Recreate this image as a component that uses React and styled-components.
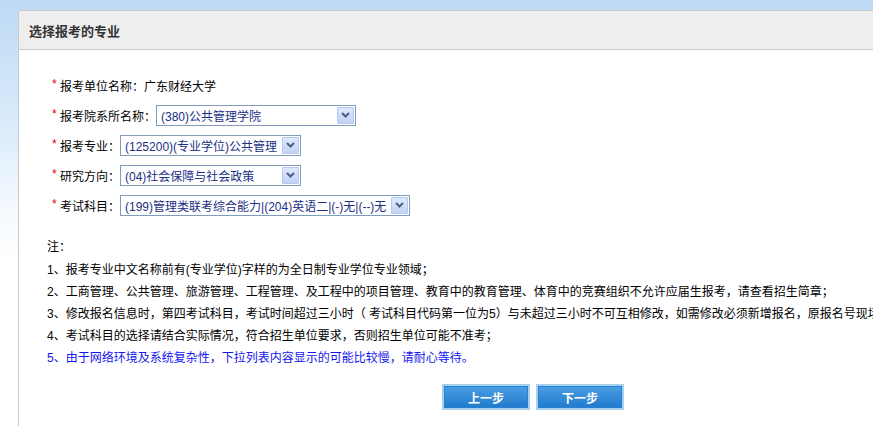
import React from "react";
import styled, { createGlobalStyle } from "styled-components";

const GlobalStyle = createGlobalStyle`
  html, body { margin: 0; padding: 0; }
  body {
    overflow: hidden;
    background: #ffffff linear-gradient(to bottom, #bddaf5 0px, #dcecfb 130px, #f7fbff 220px, #ffffff 260px) no-repeat;
    font-family: "Liberation Sans", "Noto Sans CJK SC", sans-serif;
    font-size: 12px;
    color: #000;
  }
`;

const Page = styled.div`
  padding: 10px 0 0 18px;
  height: 416px;
`;

const Panel = styled.div`
  width: 1030px;
  height: 100%;
  box-sizing: border-box;
  border: 1px solid #c9c9c9;
  border-bottom: none;
  background: #fff;
`;

const Header = styled.div`
  height: 38px;
  display: flex;
  align-items: center;
  padding-left: 10px;
  background: #eeeeee;
  border-bottom: 1px solid #c9c9c9;
  font-size: 13px;
  font-weight: bold;
  color: #333;
  white-space: nowrap;
`;

const Body = styled.div`
  padding: 20px 0 0 0;
`;

const FieldList = styled.div`
  padding-left: 33px;
`;

const Row = styled.div`
  height: 30px;
  display: flex;
  align-items: center;
  white-space: nowrap;
`;

const Star = styled.span`
  width: 8px;
  color: #e60000;
  font-size: 12px;
  align-self: center;
  margin-top: -3px;
`;

const Label = styled.span`
  color: #000;
`;

const Select = styled.div`
  width: ${(p) => p.$w}px;
  height: 21px;
  box-sizing: border-box;
  border: 1px solid #7f9db9;
  background: #fff;
  display: flex;
  align-items: center;
  padding-left: 4px;
  color: #1c2f86;
  white-space: nowrap;
  overflow: hidden;
`;

const SelectText = styled.span`
  flex: 1;
  overflow: hidden;
`;

const Arrow = styled.span`
  width: 17px;
  height: 17px;
  margin-right: 1px;
  box-sizing: border-box;
  border: 1px solid #b6c8f2;
  border-radius: 1px;
  background: linear-gradient(to bottom, #dfe8fd, #c2d2f6);
  display: flex;
  align-items: center;
  justify-content: center;
  flex-shrink: 0;
`;

const Notes = styled.div`
  margin-top: 16px;
  padding-left: 28px;
  line-height: 22px;
  white-space: nowrap;
`;

const NoteTitle = styled.div`
  margin-bottom: 1px;
`;

const NoteLine = styled.div`
  color: ${(p) => (p.$blue ? "#1515f0" : "#000")};
`;

const Buttons = styled.div`
  margin-top: 15px;
  display: flex;
  justify-content: center;
  gap: 6px;
`;

const Button = styled.button`
  width: 88px;
  height: 26px;
  box-sizing: border-box;
  border: 2px solid #a8cfee;
  box-shadow: inset 0 0 0 1px #2a80d2;
  background: linear-gradient(to bottom, #4b9fe4, #2079cc);
  color: #fff;
  font-family: "Liberation Sans", "Noto Sans CJK SC", sans-serif;
  font-size: 12px;
  font-weight: bold;
  padding: 0;
  cursor: pointer;
`;

const Chevron = () => (
  <svg width="9" height="6" viewBox="0 0 9 6">
    <path d="M1 1 L4.5 4.5 L8 1" fill="none" stroke="#4d5f86" strokeWidth="2" />
  </svg>
);

const Dropdown = ({ w, children }) => (
  <Select $w={w}>
    <SelectText>{children}</SelectText>
    <Arrow>
      <Chevron />
    </Arrow>
  </Select>
);

export default function App() {
  return (
    <>
      <GlobalStyle />
      <Page>
        <Panel>
          <Header>选择报考的专业</Header>
          <Body>
            <FieldList>
              <Row>
                <Star>*</Star>
                <Label>报考单位名称：广东财经大学</Label>
              </Row>
              <Row>
                <Star>*</Star>
                <Label>报考院系所名称：</Label>
                <Dropdown w={200}>(380)公共管理学院</Dropdown>
              </Row>
              <Row>
                <Star>*</Star>
                <Label>报考专业：</Label>
                <Dropdown w={181}>(125200)(专业学位)公共管理</Dropdown>
              </Row>
              <Row>
                <Star>*</Star>
                <Label>研究方向：</Label>
                <Dropdown w={181}>(04)社会保障与社会政策</Dropdown>
              </Row>
              <Row>
                <Star>*</Star>
                <Label>考试科目：</Label>
                <Dropdown w={290}>(199)管理类联考综合能力|(204)英语二|(-)无|(--)无</Dropdown>
              </Row>
            </FieldList>
            <Notes>
              <NoteTitle>注：</NoteTitle>
              <NoteLine>1、报考专业中文名称前有(专业学位)字样的为全日制专业学位专业领域；</NoteLine>
              <NoteLine>2、工商管理、公共管理、旅游管理、工程管理、及工程中的项目管理、教育中的教育管理、体育中的竞赛组织不允许应届生报考，请查看招生简章；</NoteLine>
              <NoteLine>3、修改报名信息时，第四考试科目，考试时间超过三小时（ 考试科目代码第一位为5）与未超过三小时不可互相修改，如需修改必须新增报名，原报名号现场确认时不能确认；</NoteLine>
              <NoteLine>4、考试科目的选择请结合实际情况，符合招生单位要求，否则招生单位可能不准考；</NoteLine>
              <NoteLine $blue>5、由于网络环境及系统复杂性，下拉列表内容显示的可能比较慢，请耐心等待。</NoteLine>
            </Notes>
            <Buttons>
              <Button type="button">上一步</Button>
              <Button type="button">下一步</Button>
            </Buttons>
          </Body>
        </Panel>
      </Page>
    </>
  );
}
